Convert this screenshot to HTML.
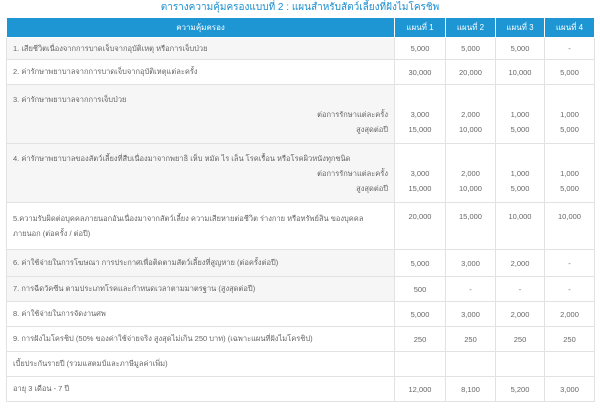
<!DOCTYPE html>
<html><head><meta charset="utf-8"><style>
body{margin:0;width:600px;height:411px;background:#fff;font-family:"Liberation Sans","Noto Sans CJK SC",sans-serif;overflow:hidden}
.t{position:absolute;top:2px;left:0;width:600px;text-align:center;color:#1a8fd0;font-size:10px;line-height:12px}
table{position:absolute;left:6px;top:17px;width:588px;border-collapse:collapse;table-layout:fixed;font-size:7.5px;color:#666}
td,th{border:1px solid #e2e2e2;padding:0 6px;vertical-align:middle}
th{background:#1e96d4;color:#fff;font-weight:normal;height:19px;border-color:#fff;font-size:8px}
td.n{text-align:center;padding:0}
tr.g td:first-child{background:#f6f6f6}
.r{text-align:right;display:block}
.sub td{vertical-align:top}
</style></head><body>
<div class="t">ตารางความคุ้มครองแบบที่ 2 : แผนสำหรับสัตว์เลี้ยงที่ฝังไมโครชิพ</div>
<table>
<colgroup><col style="width:388px"><col style="width:51px"><col style="width:50px"><col style="width:49px"><col style="width:50px"></colgroup>
<tr><th>ความคุ้มครอง</th><th>แผนที่ 1</th><th>แผนที่ 2</th><th>แผนที่ 3</th><th>แผนที่ 4</th></tr>
<tr class="g" style="height:22px"><td>1. เสียชีวิตเนื่องจากการบาดเจ็บจากอุบัติเหตุ หรือการเจ็บป่วย</td><td class="n">5,000</td><td class="n">5,000</td><td class="n">5,000</td><td class="n">-</td></tr>
<tr style="height:25px"><td>2. ค่ารักษาพยาบาลจากการบาดเจ็บจากอุบัติเหตุแต่ละครั้ง</td><td class="n">30,000</td><td class="n">20,000</td><td class="n">10,000</td><td class="n">5,000</td></tr>
<tr class="g" style="height:59px"><td style="line-height:15px">3. ค่ารักษาพยาบาลจากการเจ็บป่วย<br><span class="r">ต่อการรักษาแต่ละครั้ง</span><span class="r">สูงสุดต่อปี</span></td><td class="n" style="line-height:15px"><br>3,000<br>15,000</td><td class="n" style="line-height:15px"><br>2,000<br>10,000</td><td class="n" style="line-height:15px"><br>1,000<br>5,000</td><td class="n" style="line-height:15px"><br>1,000<br>5,000</td></tr>
<tr class="g" style="height:59px"><td style="line-height:15px">4. ค่ารักษาพยาบาลของสัตว์เลี้ยงที่สืบเนื่องมาจากพยาธิ เห็บ หมัด ไร เล็น โรคเรื้อน หรือโรคผิวหนังทุกชนิด<br><span class="r">ต่อการรักษาแต่ละครั้ง</span><span class="r">สูงสุดต่อปี</span></td><td class="n" style="line-height:15px"><br>3,000<br>15,000</td><td class="n" style="line-height:15px"><br>2,000<br>10,000</td><td class="n" style="line-height:15px"><br>1,000<br>5,000</td><td class="n" style="line-height:15px"><br>1,000<br>5,000</td></tr>
<tr style="height:47px"><td style="line-height:15px">5.ความรับผิดต่อบุคคลภายนอกอันเนื่องมาจากสัตว์เลี้ยง ความเสียหายต่อชีวิต ร่างกาย หรือทรัพย์สิน ของบุคคลภายนอก (ต่อครั้ง / ต่อปี)</td><td class="n" style="vertical-align:top;padding-top:9px">20,000</td><td class="n" style="vertical-align:top;padding-top:9px">15,000</td><td class="n" style="vertical-align:top;padding-top:9px">10,000</td><td class="n" style="vertical-align:top;padding-top:9px">10,000</td></tr>
<tr class="g" style="height:27px"><td>6. ค่าใช้จ่ายในการโฆษณา การประกาศเพื่อติดตามสัตว์เลี้ยงที่สูญหาย (ต่อครั้งต่อปี)</td><td class="n">5,000</td><td class="n">3,000</td><td class="n">2,000</td><td class="n">-</td></tr>
<tr class="g" style="height:25px"><td>7. การฉีดวัคซีน ตามประเภทโรคและกำหนดเวลาตามมาตรฐาน (สูงสุดต่อปี)</td><td class="n">500</td><td class="n">-</td><td class="n">-</td><td class="n">-</td></tr>
<tr style="height:25px"><td>8. ค่าใช้จ่ายในการจัดงานศพ</td><td class="n">5,000</td><td class="n">3,000</td><td class="n">2,000</td><td class="n">2,000</td></tr>
<tr style="height:25px"><td>9. การฝังไมโครชิป (50% ของค่าใช้จ่ายจริง สูงสุดไม่เกิน 250 บาท) (เฉพาะแผนที่ฝังไมโครชิป)</td><td class="n">250</td><td class="n">250</td><td class="n">250</td><td class="n">250</td></tr>
<tr style="height:25px"><td>เบี้ยประกันรายปี (รวมแสตมป์และภาษีมูลค่าเพิ่ม)</td><td></td><td></td><td></td><td></td></tr>
<tr style="height:25px"><td>อายุ 3 เดือน - 7 ปี</td><td class="n">12,000</td><td class="n">8,100</td><td class="n">5,200</td><td class="n">3,000</td></tr>
</table>
</body></html>
